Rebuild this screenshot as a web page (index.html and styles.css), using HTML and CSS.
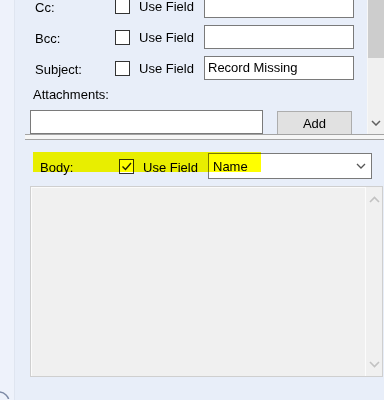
FILE: index.html
```html
<!DOCTYPE html>
<html lang="en">
<head>
    <meta charset="UTF-8">
    <meta name="viewport" content="width=device-width, initial-scale=1.0">
    <title>Mail fields</title>
    <link rel="stylesheet" href="styles.css">
</head>
<body>
<div class="window">
    <div class="gutter"></div>
    <div class="main">
        <div class="top">
            <div class="fields">
                <div class="row">
                    <span class="label">Cc:</span>
                    <span class="check"></span>
                    <span class="use">Use Field</span>
                    <span class="text"></span>
                </div>
                <div class="row">
                    <span class="label">Bcc:</span>
                    <span class="check"></span>
                    <span class="use">Use Field</span>
                    <span class="text"></span>
                </div>
                <div class="row">
                    <span class="label">Subject:</span>
                    <span class="check"></span>
                    <span class="use">Use Field</span>
                    <span class="text">Record Missing</span>
                </div>
                <div class="attach-label">Attachments:</div>
                <div class="attach">
                    <span class="text attach-box"></span>
                    <span class="btn">Add</span>
                </div>
            </div>
            <div class="vscroll">
                <div class="thumb"></div>
                <svg class="arrow" width="10" height="6" viewBox="0 0 10 6"><path d="M1 1 L5 5 L9 1" fill="none" stroke="#606060" stroke-width="1.5"/></svg>
            </div>
        </div>
        <div class="splitter"></div>
        <div class="bottom">
            <div class="body-row">
                <span class="label">Body:</span>
                <span class="check checked">
                    <svg width="13" height="13" viewBox="0 0 13 13"><path d="M2.5 6.5 L5.5 9.5 L11 3" fill="none" stroke="#222" stroke-width="1.4"/></svg>
                </span>
                <span class="use">Use Field</span>
                <span class="combo">
                    <span class="combo-text">Name</span>
                    <svg width="10" height="6" viewBox="0 0 10 6"><path d="M1 1 L5 5 L9 1" fill="none" stroke="#555" stroke-width="1.3"/></svg>
                </span>
                <div class="marker"></div>
            </div>
            <div class="textarea">
                <div class="ta-body"></div>
                <div class="ta-scroll">
                    <svg width="11" height="7" viewBox="0 0 11 7"><path d="M1 6 L5.5 1.5 L10 6" fill="none" stroke="#c2c2c2" stroke-width="1.6"/></svg>
                    <svg width="11" height="7" viewBox="0 0 11 7"><path d="M1 1 L5.5 5.5 L10 1" fill="none" stroke="#c2c2c2" stroke-width="1.6"/></svg>
                </div>
            </div>
        </div>
        <div class="footer">
            <svg width="10" height="22" viewBox="0 0 10 22"><circle cx="-1" cy="25" r="10" fill="none" stroke="#7d8aa6" stroke-width="1.5"/></svg>
        </div>
    </div>
</div>
</body>
</html>
```

FILE: styles.css
```css
html, body{
    margin: 0;
    padding: 0;
}
body{
    width: 384px;
    height: 400px;
    overflow: hidden;
    background-color: #e8eef9;
    font-family: "Liberation Sans", Arial, sans-serif;
    font-size: 13px;
    color: #000;
}

.window{
    display: flex;
    height: 400px;
}
.gutter{
    width: 14px;
    background-color: #eef2fb;
    border-right: 1px solid #dfe5f0;
}
.main{
    width: 369px;
    display: flex;
    flex-direction: column;
}

/* upper scrolled panel */
.top{
    height: 134px;
    display: flex;
    overflow: hidden;
}
.fields{
    flex: 1;
    margin-top: -9px;
}
.row{
    height: 31px;
    display: grid;
    grid-template-columns: 80px 24px 65px 150px;
    align-items: center;
    padding-left: 20px;
}
.row .label{
    padding-top: 2px;
}
.check{
    width: 13px;
    height: 13px;
    border: 1px solid #333;
    background-color: #fff;
    display: flex;
    align-items: center;
    justify-content: center;
}
.text{
    height: 22px;
    margin-top: -2px;
    border: 1px solid #7a7a7a;
    background-color: #fff;
    padding: 0 3px;
    line-height: 22px;
    box-sizing: content-box;
    width: 142px;
}
.attach-label{
    margin-top: 3px;
    padding-left: 18px;
    line-height: 16px;
}
.attach{
    display: flex;
    margin-top: 7px;
    padding-left: 15px;
    align-items: flex-start;
}
.attach .text{
    margin-top: 0;
}
.attach-box{
    width: 225px;
}
.btn{
    margin-left: 14px;
    margin-top: 1px;
    width: 73px;
    height: 24px;
    line-height: 24px;
    text-align: center;
    background-color: #e1e1e1;
    border: 1px solid #adadad;
}
.vscroll{
    width: 16px;
    border-left: 1px solid #f7f7f7;
    background-color: #f0f0f0;
    display: flex;
    flex-direction: column;
    align-items: center;
}
.thumb{
    width: 16px;
    height: 58px;
    background-color: #cdcdcd;
}
.vscroll .arrow{
    margin-top: auto;
    margin-bottom: 8px;
}

.splitter{
    margin-left: 10px;
    height: 4px;
    border-top: 1px solid #a3a3a3;
    border-bottom: 1px solid #a3a3a3;
    background-color: #f6f6f6;
}

/* body area */
.bottom{
    display: flex;
    flex-direction: column;
}
.body-row{
    position: relative;
    margin-top: 13px;
    height: 26px;
    display: grid;
    grid-template-columns: 79px 24px 65px 164px;
    align-items: center;
    padding-left: 25px;
}
.body-row .label,
.body-row .use{
    padding-top: 2px;
}
.combo{
    height: 24px;
    border: 1px solid #7a7a7a;
    background-color: #fff;
    display: flex;
    align-items: center;
    justify-content: space-between;
    padding: 0 5px 0 4px;
}
.marker{
    position: absolute;
    left: 18px;
    top: -1px;
    width: 228px;
    height: 20px;
    background-color: #ffff00;
    mix-blend-mode: multiply;
}
.textarea{
    margin-top: 7px;
    margin-left: 15px;
    width: 351px;
    height: 189px;
    border: 1px solid #cfcfcf;
    background-color: #f0f0f0;
    display: flex;
}
.ta-body{
    flex: 1;
    border-top: 1px solid #fbfbfb;
    border-left: 1px solid #fbfbfb;
}
.ta-scroll{
    width: 16px;
    border-left: 1px solid #fcfcfc;
    display: flex;
    flex-direction: column;
    justify-content: space-between;
    align-items: center;
    padding: 9px 0 8px;
}
.footer{
    flex: 1;
    display: flex;
    margin-left: -15px;
}
```
